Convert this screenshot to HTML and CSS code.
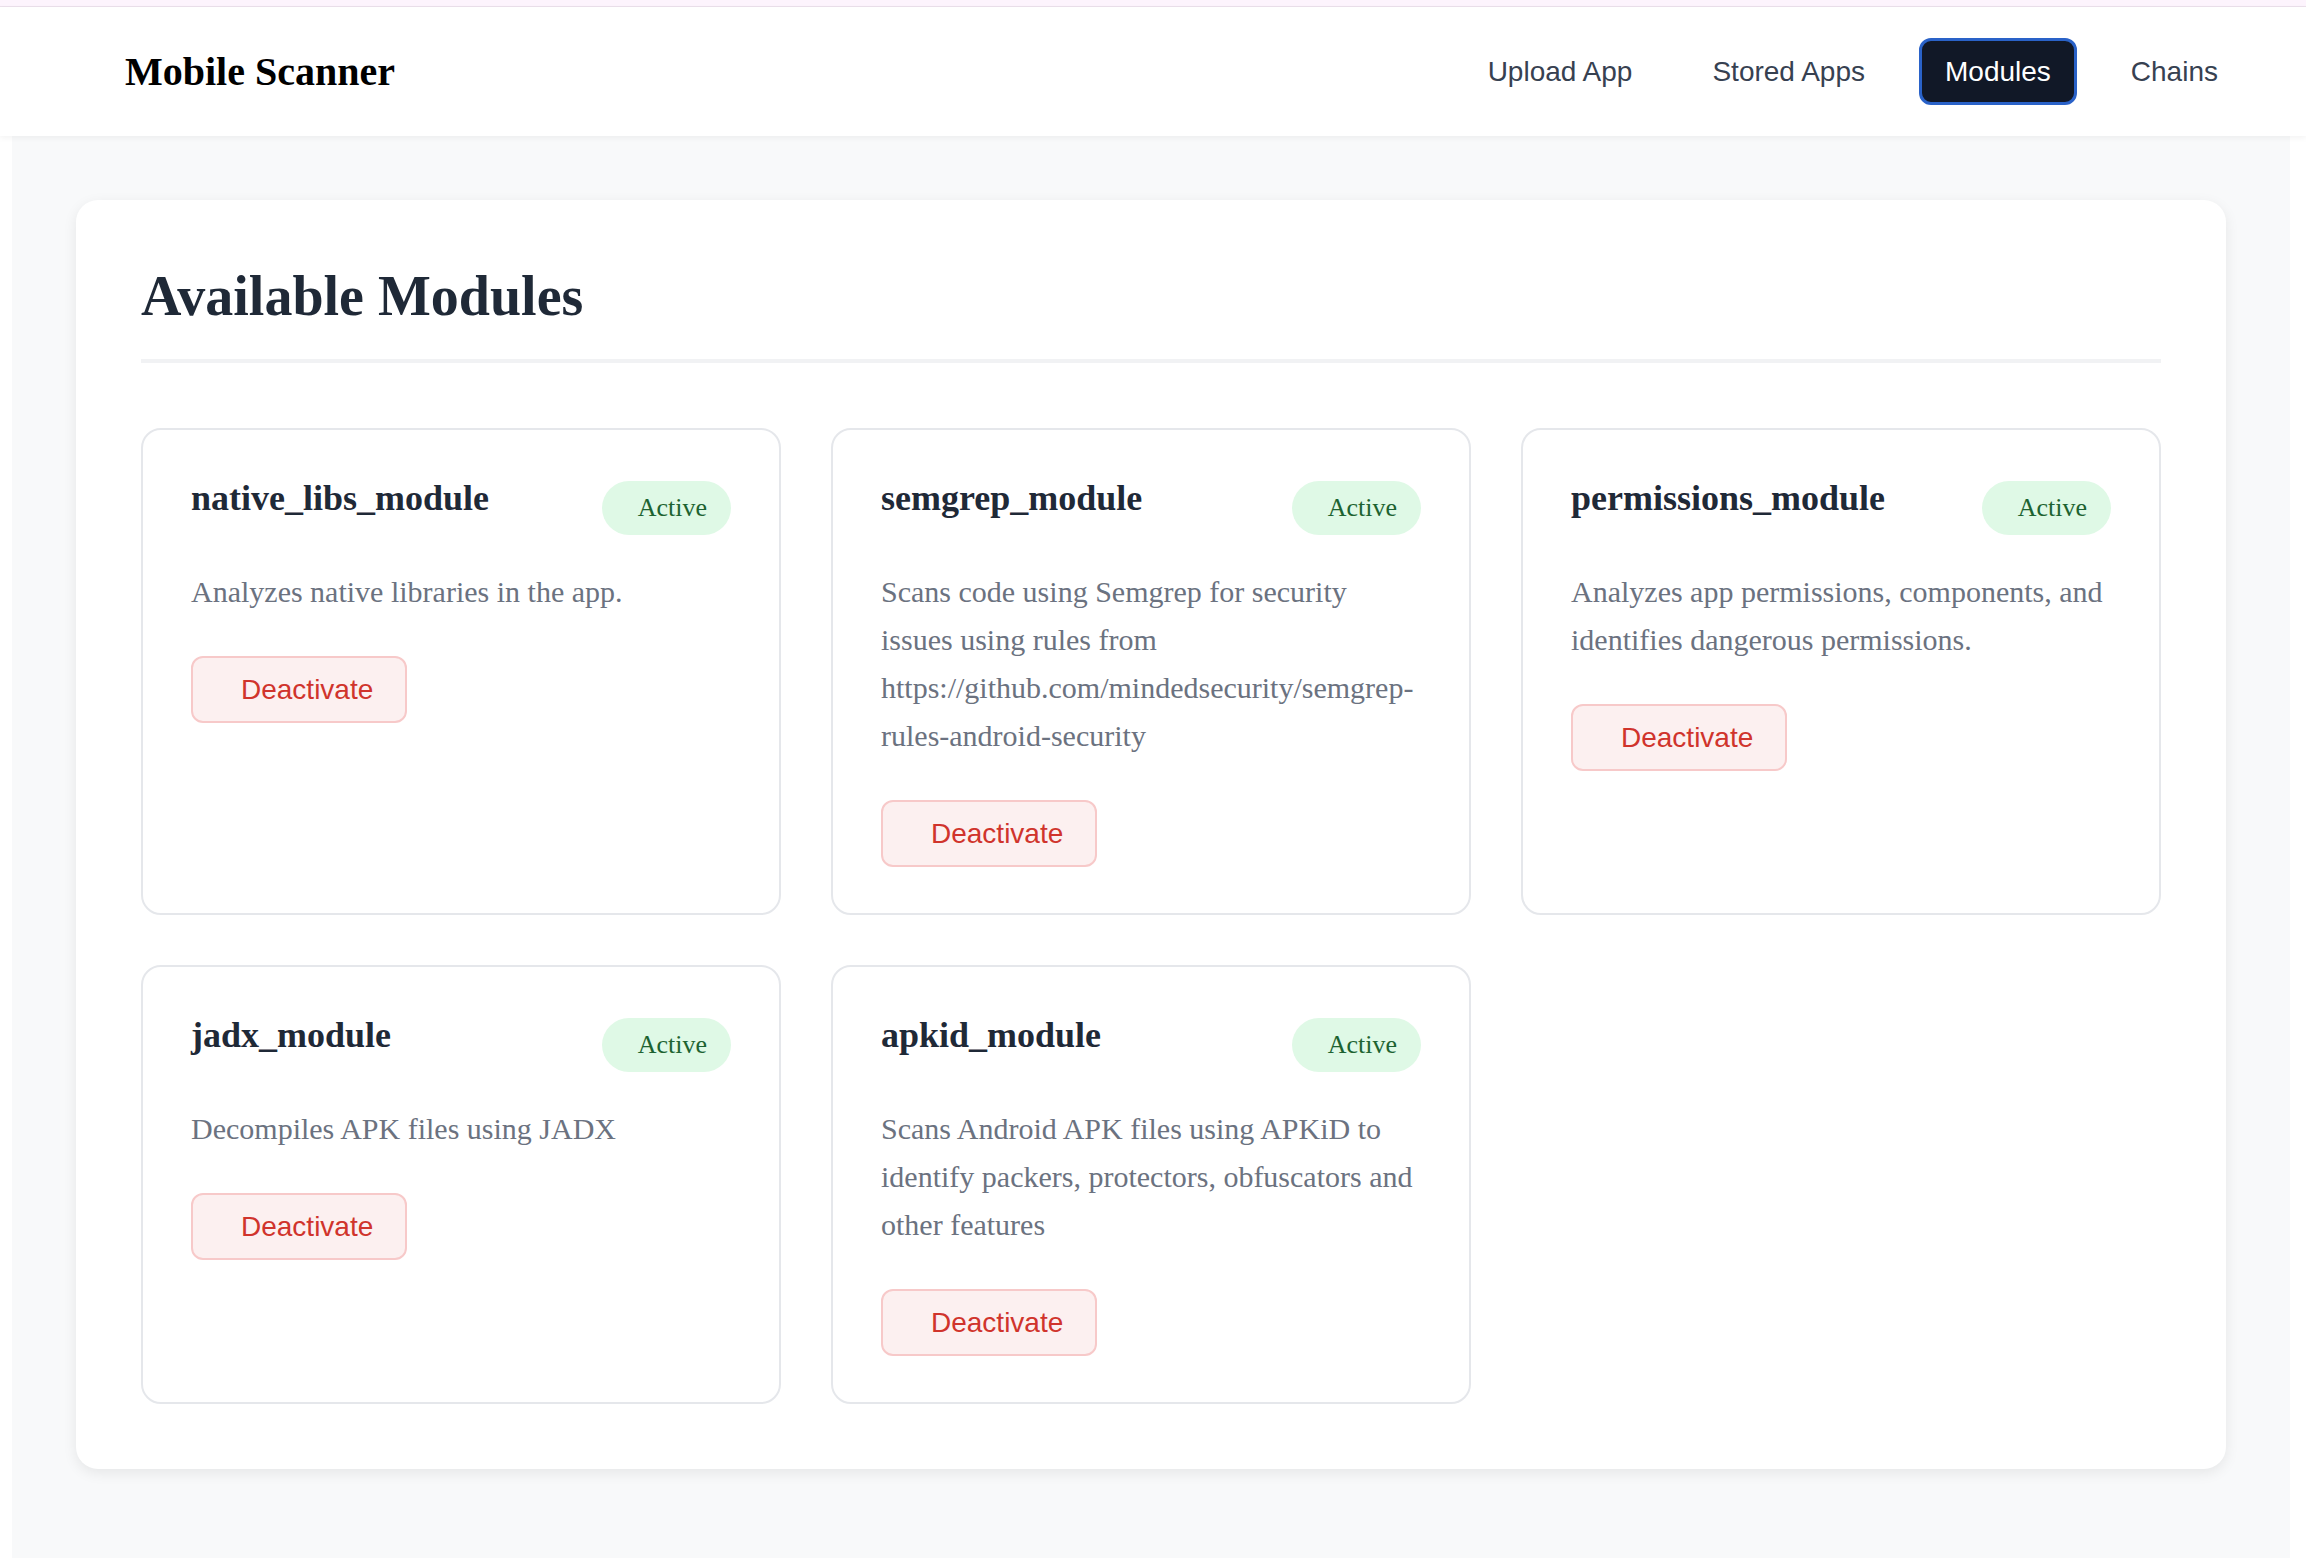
FILE: index.html
```html
<!DOCTYPE html>
<html lang="en">
<head>
<meta charset="utf-8">
<title>Mobile Scanner - Modules</title>
<link rel="stylesheet" href="styles.css">
</head>
<body>
  <div class="topband"></div>
  <header class="site-header">
    <div class="brand">Mobile Scanner</div>
    <nav class="nav">
      <a class="nav-link" href="#">Upload App</a>
      <a class="nav-link" href="#">Stored Apps</a>
      <a class="nav-link active" href="#">Modules</a>
      <a class="nav-link" href="#">Chains</a>
    </nav>
  </header>
  <main class="main">
    <section class="panel">
      <h2 class="panel-title">Available Modules</h2>
      <div class="grid">
        <div class="module">
          <div class="module-head">
            <h3 class="module-name">native_libs_module</h3>
            <span class="badge">Active</span>
          </div>
          <p class="module-desc">Analyzes native libraries in the app.</p>
          <button class="btn-deactivate">Deactivate</button>
        </div>
        <div class="module">
          <div class="module-head">
            <h3 class="module-name">semgrep_module</h3>
            <span class="badge">Active</span>
          </div>
          <p class="module-desc">Scans code using Semgrep for security issues using rules from https://github.com/mindedsecurity/semgrep-rules-android-security</p>
          <button class="btn-deactivate">Deactivate</button>
        </div>
        <div class="module">
          <div class="module-head">
            <h3 class="module-name">permissions_module</h3>
            <span class="badge">Active</span>
          </div>
          <p class="module-desc">Analyzes app permissions, components, and identifies dangerous permissions.</p>
          <button class="btn-deactivate">Deactivate</button>
        </div>
        <div class="module">
          <div class="module-head">
            <h3 class="module-name">jadx_module</h3>
            <span class="badge">Active</span>
          </div>
          <p class="module-desc">Decompiles APK files using JADX</p>
          <button class="btn-deactivate">Deactivate</button>
        </div>
        <div class="module">
          <div class="module-head">
            <h3 class="module-name">apkid_module</h3>
            <span class="badge">Active</span>
          </div>
          <p class="module-desc">Scans Android APK files using APKiD to identify packers, protectors, obfuscators and other features</p>
          <button class="btn-deactivate">Deactivate</button>
        </div>
      </div>
    </section>
  </main>
</body>
</html>
```

FILE: styles.css
```css
* {
  box-sizing: border-box;
}

html, body {
  margin: 0;
  padding: 0;
  background: #ffffff;
}

body {
  font-family: "Liberation Serif", "Times New Roman", serif;
  min-height: 100vh;
  display: flex;
  flex-direction: column;
}

.topband {
  height: 7px;
  background: #fdf4fd;
  border-bottom: 1px solid #ebe0eb;
}

.site-header {
  height: 129px;
  background: #ffffff;
  display: flex;
  align-items: center;
  justify-content: space-between;
  padding: 0 62px 0 125px;
  box-shadow: 0 2px 6px rgba(0, 0, 0, 0.05);
  position: relative;
  z-index: 1;
}

.brand {
  font-family: "Liberation Serif", "Times New Roman", serif;
  font-weight: 700;
  font-size: 40px;
  color: #000000;
}

.nav {
  display: flex;
  align-items: center;
  gap: 28px;
}

.nav-link {
  font-family: "Liberation Sans", Arial, sans-serif;
  font-size: 28px;
  color: #374151;
  text-decoration: none;
  height: 67px;
  line-height: 61px;
  padding: 0 23px;
  border: 3px solid transparent;
  border-radius: 12px;
}

.nav-link.active {
  background: #111827;
  color: #ffffff;
  border-color: #2a62c8;
}

.main {
  flex: 1;
  background: #f8f9fa;
  margin: 0 16px 0 12px;
  padding: 64px;
}

.panel {
  background: #ffffff;
  border-radius: 22px;
  padding: 64px 65px 65px;
  box-shadow: 0 4px 14px rgba(0, 0, 0, 0.08);
}

.panel-title {
  margin: 0 0 65px;
  font-family: "Liberation Serif", "Times New Roman", serif;
  font-weight: 700;
  font-size: 56px;
  line-height: normal;
  color: #1f2937;
  padding-bottom: 31px;
  border-bottom: 4px solid #f1f2f4;
}

.grid {
  display: grid;
  grid-template-columns: repeat(3, 1fr);
  gap: 50px;
}

.module {
  border: 2px solid #e5e7eb;
  border-radius: 20px;
  padding: 47px 48px 46px;
  background: #ffffff;
}

.module-head {
  display: flex;
  justify-content: space-between;
  align-items: flex-start;
}

.module-name {
  margin: 0;
  font-family: "Liberation Serif", "Times New Roman", serif;
  font-weight: 700;
  font-size: 36px;
  line-height: normal;
  color: #1f2937;
}

.badge {
  margin-top: 4px;
  font-family: "Liberation Serif", "Times New Roman", serif;
  font-size: 26px;
  line-height: 30px;
  padding: 12px 24px 12px 36px;
  border-radius: 999px;
  background: #dff9e6;
  color: #1d6331;
  white-space: nowrap;
}

.module-desc {
  margin: 33px 0 40px;
  font-family: "Liberation Serif", "Times New Roman", serif;
  font-size: 30px;
  line-height: 48px;
  color: #6b7280;
}

.btn-deactivate {
  display: block;
  height: 67px;
  padding: 0 32px 0 48px;
  font-family: "Liberation Sans", Arial, sans-serif;
  font-size: 28px;
  line-height: 63px;
  color: #d0342c;
  background: #fcf0f0;
  border: 2px solid #f7c9c9;
  border-radius: 12px;
  cursor: pointer;
}
```
